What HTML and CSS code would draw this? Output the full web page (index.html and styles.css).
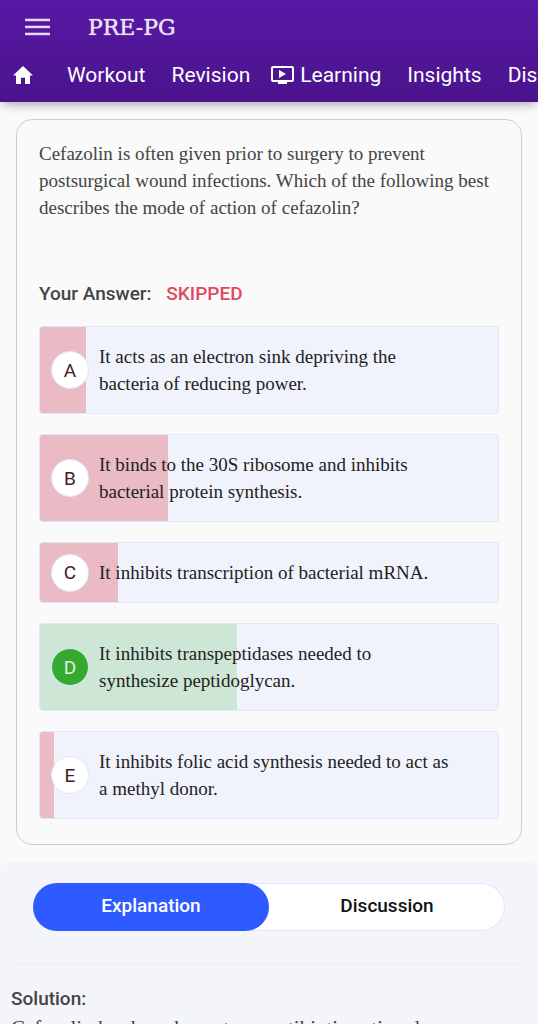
FILE: index.html
```html
<!DOCTYPE html>
<html lang="en">
<head>
    <meta charset="UTF-8">
    <meta name="viewport" content="width=device-width, initial-scale=1.0">
    <title>PRE-PG</title>
    <link rel="stylesheet" href="styles.css">
</head>
<body>
    <header class="header">
        <div class="topbar">
            <button type="button" class="menu-btn" aria-label="Menu">
                <svg width="26" height="18" viewBox="0 0 26 18" fill="#e4daf2">
                    <rect x="0" y="0.7" width="25" height="2.5"/>
                    <rect x="0" y="7.7" width="25" height="2.5"/>
                    <rect x="0" y="14.7" width="25" height="2.5"/>
                </svg>
            </button>
            <a href="#" class="brand">PRE-PG</a>
        </div>
        <nav class="nav">
            <a href="#" class="home" aria-label="Home">
                <svg width="20" height="18" viewBox="2 3 20 17" preserveAspectRatio="none" fill="#fff">
                    <path d="M10 20v-6h4v6h5v-8h3L12 3 2 12h3v8z"/>
                </svg>
            </a>
            <a href="#">Workout</a>
            <a href="#">Revision</a>
            <a href="#" class="learning">
                <svg width="23" height="19" viewBox="0 0 23 19">
                    <rect x="1" y="1" width="21" height="14" rx="1" fill="none" stroke="#fff" stroke-width="2"/>
                    <path d="M8 4v8l7-4zM7 15h9v3H7z" fill="#fff"/>
                </svg>
                Learning
            </a>
            <a href="#">Insights</a>
            <a href="#">Discussion</a>
        </nav>
    </header>

    <main>
        <section class="card">
            <p class="question">Cefazolin is often given prior to surgery to prevent postsurgical wound infections. Which of the following best describes the mode of action of cefazolin?</p>
            <p class="answer">Your Answer: <span class="skipped">SKIPPED</span></p>
            <ul class="options">
                <li class="option">
                    <span class="bar" style="width: 10%"></span>
                    <span class="letter">A</span>
                    <span class="text">It acts as an electron sink depriving the bacteria of reducing power.</span>
                </li>
                <li class="option">
                    <span class="bar" style="width: 28%"></span>
                    <span class="letter">B</span>
                    <span class="text">It binds to the 30S ribosome and inhibits bacterial protein synthesis.</span>
                </li>
                <li class="option">
                    <span class="bar" style="width: 17%"></span>
                    <span class="letter">C</span>
                    <span class="text">It inhibits transcription of bacterial mRNA.</span>
                </li>
                <li class="option correct">
                    <span class="bar" style="width: 43%"></span>
                    <span class="letter">D</span>
                    <span class="text">It inhibits transpeptidases needed to synthesize peptidoglycan.</span>
                </li>
                <li class="option">
                    <span class="bar" style="width: 3%"></span>
                    <span class="letter">E</span>
                    <span class="text">It inhibits folic acid synthesis needed to act as a methyl donor.</span>
                </li>
            </ul>
        </section>

        <section class="details">
            <div class="tabs">
                <button type="button" class="tab active">Explanation</button>
                <button type="button" class="tab">Discussion</button>
            </div>
            <div class="solution">
                <h2>Solution:</h2>
                <p>Cefazolin has broad-spectrum antibiotic action due</p>
            </div>
        </section>
    </main>
</body>
</html>
```

FILE: styles.css
```css
* {
    box-sizing: border-box;
}
html {
    height: 100%;
    overflow: hidden;
}
body {
    margin: 0;
    height: 100%;
    overflow-y: auto;
    scrollbar-width: none;
    background-color: #fafafa;
    font-family: Roboto, sans-serif;
    color: #444;
}
p, h2, ul {
    margin: 0;
    padding: 0;
}
a {
    color: #fff;
    text-decoration: none;
}
button {
    border: none;
    background: none;
    padding: 0;
    font-family: inherit;
    cursor: pointer;
}
svg {
    display: block;
}
.header {
    padding-bottom: 6px;
    background: linear-gradient(#5817a5, #4a148c);
    box-shadow: 0 5px 10px -3px rgba(0, 0, 0, 0.35);
}
.topbar {
    display: flex;
    align-items: center;
    gap: 37px;
    height: 54px;
    padding-left: 25px;
}
.brand {
    font-family: "Roboto Slab", "DejaVu Serif", serif;
    font-size: 22px;
    color: #e9e1f4;
    text-shadow: 0 0 1px #e9e1f4;
}
.nav {
    display: flex;
    align-items: center;
    gap: 26px;
    height: 42px;
    padding-left: 13px;
    overflow-x: auto;
    scrollbar-width: none;
    white-space: nowrap;
    font-size: 21px;
}
.home {
    margin-right: 8px;
}
.learning {
    display: flex;
    align-items: center;
    gap: 6px;
    margin-left: -5px;
}
.card {
    margin: 17px 16px;
    padding: 20px 22px 25px;
    border: 1px solid #ccc;
    border-radius: 16px;
}
.question {
    font-family: "Liberation Serif", serif;
    font-size: 19px;
    line-height: 27px;
}
.answer {
    margin: 61px 0 20px;
    font-size: 19px;
    line-height: 24px;
    font-weight: 500;
}
.skipped {
    margin-left: 10px;
    color: #e04a5f;
}
.options {
    display: grid;
    gap: 20px;
    list-style: none;
}
.option {
    position: relative;
    display: flex;
    align-items: center;
    gap: 10px;
    padding: 16px 46px 16px 11px;
    border: 1px solid #dfe6fd;
    border-radius: 4px;
    background-color: #f1f3fc;
    overflow: hidden;
}
.bar {
    position: absolute;
    top: 0;
    bottom: 0;
    left: 0;
    background-color: #eabac5;
}
.letter {
    position: relative;
    display: flex;
    align-items: center;
    justify-content: center;
    flex-shrink: 0;
    width: 38px;
    height: 38px;
    margin: -6px 0;
    border: 1px solid #dfe6fd;
    border-radius: 50%;
    background-color: #fff;
    color: #3d2028;
    font-size: 19px;
}
.text {
    position: relative;
    font-family: "Liberation Serif", serif;
    font-size: 19px;
    line-height: 27px;
    color: #222;
}
.correct .bar {
    background-color: #cde6d6;
}
.correct .letter {
    background-color: #34ab30;
    color: #e0f2e0;
}
.details {
    padding: 21px 11px 0;
    border-radius: 8px 8px 0 0;
    background-color: #f4f5fb;
}
.tabs {
    display: flex;
    margin: 0 22px 32px;
    border-radius: 25px;
    background-color: #fff;
    box-shadow: inset 0 0 0 1px #dfe6fd;
}
.tab {
    flex: 1;
    height: 48px;
    padding-bottom: 3px;
    border-radius: 25px;
    font-size: 19px;
    font-weight: 500;
    color: #111;
}
.tab.active {
    background-color: #2d5bff;
    color: #fff;
}
.solution {
    padding-top: 23px;
    border-top: 1px solid #eeeeec;
}
.solution h2 {
    font-size: 19px;
    line-height: 24px;
    font-weight: 500;
}
.solution p {
    margin-top: 4px;
    font-family: "Liberation Serif", serif;
    font-size: 21px;
    line-height: 27px;
}
```
